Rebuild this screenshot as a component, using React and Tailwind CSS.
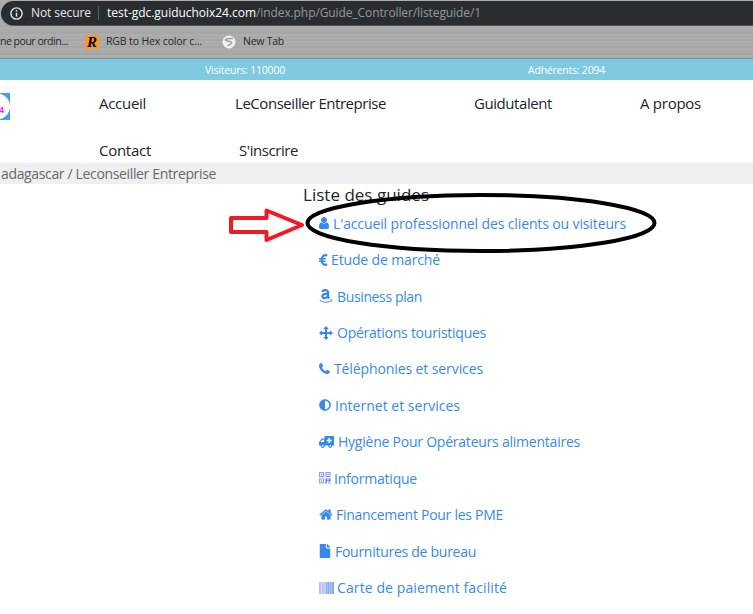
import React, { useLayoutEffect, useRef } from "react";
import { FaAdjust, FaFile } from "react-icons/fa";

// Text run whose tracking is adjusted so that it spans exactly `w` pixels.
function Fit({ w, children, className = "" }) {
  const ref = useRef(null);
  useLayoutEffect(() => {
    const el = ref.current;
    el.style.letterSpacing = "0px";
    const natural = el.getBoundingClientRect().width;
    el.style.letterSpacing = `${(w - natural) / el.textContent.length}px`;
  }, [w, children]);
  return <span ref={ref} className={`inline-block shrink-0 whitespace-nowrap ${className}`}>{children}</span>;
}

function UserIcon() {
  return (
    <svg viewBox="0 128 1280 1536" preserveAspectRatio="none" className="h-[12px] w-[10px]" fill="currentColor">
      <path d="M1280 1399q0 109-62.5 187t-150.5 78h-854q-88 0-150.5-78t-62.5-187q0-85 8.5-160.5t31.5-152 58.5-131 94-89 134.5-34.5q131 128 313 128t313-128q76 0 134.5 34.500t94 89 58.500 131 31.500 152 8.500 160.500zm-256-887q0 159-112.500 271.500t-271.500 112.500-271.500-112.500-112.500-271.500 112.500-271.500 271.500-112.500 271.500 112.500 112.500 271.500z" />
    </svg>
  );
}

function EuroIcon() {
  return (
    <svg viewBox="0 0 9 12" className="h-[12px] w-[9px]" fill="none" stroke="currentColor">
      <path d="M8.2 1.800C5.200.2 2.700 2 2.700 6s2.500 5.800 5.500 4.200" strokeWidth="2.200" />
      <path d="M0 4.700h7M0 7.300h6.400" strokeWidth="1.500" />
    </svg>
  );
}

function AmazonIcon() {
  return (
    <svg viewBox="0 0 14 14" className="h-[14px] w-[14px]" fill="none" stroke="currentColor">
      <path d="M3.400 3.200C3.700.6 9 .3 9 3.400v4.500l1.300 1.300M9 4.600c-3.600 0-5.600.5-5.600 2.600 0 2.600 4.100 2.700 5.600-.1" strokeWidth="2.200" />
      <path d="M.8 11.200c3.200 2.400 8 2.700 11 .8M11.500 11c1.500-.2 1.800 0 1 1.800" strokeWidth="1" />
    </svg>
  );
}

function MoveIcon() {
  return (
    <svg viewBox="0 0 14 14" className="size-[14px]" fill="currentColor">
      <path d="M7 0l2.800 3H8v3h3V4.200L14 7l-3 2.800V8H8v3h1.800L7 14l-2.800-3H6V8H3v1.800L0 7l3-2.800V6h3V3H4.200z" />
    </svg>
  );
}

function PhoneIcon() {
  return (
    <svg viewBox="0 0 11 11" className="size-[11px]" fill="currentColor">
      <path d="M2.600 0C3 0 3.500 1.600 4 2.700c.4.900-1.100 1.300-1.100 1.900 0 .7 2.600 3.400 3.500 3.500.6.100 1.200-1.300 1.900-1 .9.300 2.700 1.200 2.700 1.500 0 1.500-1.300 2.400-2.800 2.400C4.300 11 0 6.400 0 2.800 0 1.300 1.200 0 2.600 0z" />
    </svg>
  );
}

function AmbulanceIcon() {
  return (
    <svg viewBox="0 0 15 12" className="h-[12px] w-[15px]">
      <path fill="currentColor" fillRule="evenodd" d="M6 0h8.500q.5 0 .5.500V9.500H0V6.200L2.500 2.500H5.500V.500Q5.500 0 6 0zM3 3.700L1.400 6H5V3.700zM9.400 2v1.800H7.700v1.400h1.700V7h1.600V5.200h1.700V3.800H11V2z" />
      <circle cx="3.800" cy="9.800" r="1.500" fill="#fff" stroke="currentColor" strokeWidth="1.300" />
      <circle cx="11.200" cy="9.800" r="1.500" fill="#fff" stroke="currentColor" strokeWidth="1.300" />
    </svg>
  );
}

function QrIcon() {
  return (
    <svg viewBox="0 0 12 12" className="size-[12px]">
      <path d="M.6.600h4v4h-4zM7 .600h4v4H7zM.6 7h4v4h-4z" fill="none" stroke="#8d9fee" strokeWidth="1.200" />
      <path d="M2 2h1.300v1.300H2zM8.400 2h1.300v1.300H8.400zM2 8.400h1.300v1.300H2zM6.400 6.400h2v1.300h1.200V6.400h2v3.400h-2V8.800H8v2.800H6.400zM9 10.500h1v1H9zM10.700 10.500h1v1h-1z" fill="#6484ec" />
    </svg>
  );
}

function HomeIcon() {
  return (
    <svg viewBox="0 0 1792 1792" className="h-[15px] w-[14px]" fill="currentColor" stroke="currentColor" strokeWidth="30">
      <path d="M1472 992v480q0 26-19 45t-45 19h-384v-384h-256v384h-384q-26 0-45-19t-19-45v-480q0-1 .5-3t.5-3l575-474 575 474q1 2 1 6zm223-69l-62 74q-8 9-21 11h-3q-13 0-21-7l-692-577-692 577q-12 8-24 7-13-2-21-11l-62-74q-8-10-7-23.500t11-21.500l719-599q32-26 76-26t76 26l244 204v-195q0-14 9-23t23-9h192q14 0 23 9t9 23v408l219 182q10 8 11 21.500t-7 23.500z" />
    </svg>
  );
}

function BarcodeIcon() {
  return (
    <svg viewBox="0 0 15 12" className="h-[12px] w-[15px]" shapeRendering="crispEdges">
      <path fill="#d0b4ef" d="M0 0h1v12H0z" />
      <path fill="#c6bcf2" d="M1 0h1v12H1zM3 0h1v12H3z" />
      <path fill="#e4d8f8" d="M2 0h1v12H2z" />
      <path fill="#b4d6f6" d="M4 0h3v12H4z" />
      <path fill="#86b0ef" d="M7 0h1v12H7zM9 0h1v12H9z" />
      <path fill="#c7b8f1" d="M8 0h1v12H8zM10 0h1v12h-1z" />
      <path fill="#93a6f0" d="M11 0h1v12h-1zM13 0h2v12h-2z" />
      <path fill="#a8cff5" d="M12 0h1v12h-1z" />
    </svg>
  );
}

const guides = [
  { icon: <UserIcon />, box: "w-[14px]", w: 293, text: "L'accueil professionnel des clients ou visiteurs" },
  { icon: <EuroIcon />, box: "w-[12px]", w: 109, text: "Etude de marché" },
  { icon: <AmazonIcon />, box: "w-[18px]", w: 85, text: "Business plan" },
  { icon: <MoveIcon />, box: "w-[18px]", w: 149, text: "Opérations touristiques" },
  { icon: <PhoneIcon />, box: "w-[15px]", w: 149, text: "Téléphonies et services" },
  { icon: <FaAdjust className="size-[12px]" />, box: "w-[16px]", w: 125, text: "Internet et services" },
  { icon: <AmbulanceIcon />, box: "w-[19px]", w: 242, text: "Hygiène Pour Opérateurs alimentaires" },
  { icon: <QrIcon />, box: "w-[15px]", w: 83, text: "Informatique" },
  { icon: <HomeIcon />, box: "w-[17px]", w: 167, text: "Financement Pour les PME" },
  { icon: <FaFile className="h-[14px] w-[12px]" />, box: "w-[16px]", w: 141, text: "Fournitures de bureau" },
  { icon: <BarcodeIcon />, box: "w-[18px]", w: 170, text: "Carte de paiement facilité" },
];

export default function App() {
  return (
    <div className="relative h-[614px] w-[753px] overflow-hidden bg-white font-['Open_Sans','Noto_Sans',sans-serif]">
      <div className="h-[59px] border-b border-[#7c9198] bg-[#acacac] bg-[repeating-linear-gradient(180deg,#b1b1b1_0px,#a7a7a7_2px,#aeaeae_3px,#a4a4a4_5px,#b0b0b0_7px)]">
        <div className="pt-px">
          <div className="ml-px flex h-[25px] items-center rounded-l-full border-b border-[#55595b] bg-[#292d30] pl-[9px] text-[12px] text-[#e6e7e8]">
            <svg viewBox="0 0 13 13" className="size-[13px]" fill="none" stroke="currentColor" strokeWidth="1.400">
              <circle cx="6.500" cy="6.500" r="5.600" />
              <path d="M6.500 5.700v4M6.500 3v1.500" />
            </svg>
            <Fit w={60} className="ml-[8px]">Not secure</Fit>
            <span className="ml-[7px] h-[14px] w-px bg-[#5d6163]" />
            <span className="ml-[8px] flex">
              <Fit w={149} className="text-white">test-gdc.guiduchoix24.com</Fit>
              <Fit w={225} className="text-[#93989b]">/index.php/Guide_Controller/listeguide/1</Fit>
            </span>
          </div>
        </div>
        <div className="flex h-[32px] items-center text-[10.500px] text-[#282828]">
          <Fit w={68}>ne pour ordin...</Fit>
          <span className="ml-[17px] flex h-[14px] w-[14px] items-center justify-center bg-[#ff962d] font-['Liberation_Serif',serif] text-[15px] leading-none font-bold text-black italic">R</span>
          <Fit w={96} className="ml-[7px]">RGB to Hex color c...</Fit>
          <svg viewBox="0 0 14 14" className="ml-[20px] size-[14px]">
            <circle cx="7" cy="7" r="6.500" fill="#f1f1f1" />
            <path d="M11 3.500C8 3.800 4 3 3.500 4.800c-.2 2 6 .9 6.200 3 .1 1.700-2.500 1.900-4.200 3.200" fill="none" stroke="#a0a0a0" strokeWidth="1.400" />
          </svg>
          <Fit w={41} className="ml-[7px]">New Tab</Fit>
        </div>
      </div>

      <div className="flex h-[21px] items-center bg-[#7fcae1] pt-[2px] text-[10.500px] text-white">
        <Fit w={80} className="ml-[205px]">Visiteurs: 110000</Fit>
        <Fit w={77} className="ml-[243px]">Adhérents: 2094</Fit>
      </div>

      <div className="flex h-[83px] text-[15px] text-[#212529]">
        <svg viewBox="0 0 10 27" className="mt-[13px] h-[27px] w-[10px]">
          <path d="M0 0h10v27H0z" fill="#479bf8" />
          <circle cx="-3" cy="13.500" r="13" fill="#fff" />
          <text x="-1" y="20" fontSize="9" fontWeight="700" fill="#fb1be0" fontFamily="Liberation Sans, sans-serif">4</text>
        </svg>
        <nav className="ml-[89px]">
          <div className="flex h-[47px] items-center">
            <Fit w={47}>Accueil</Fit>
            <Fit w={151} className="ml-[89px]">LeConseiller Entreprise</Fit>
            <Fit w={78} className="ml-[88px]">Guidutalent</Fit>
            <Fit w={61} className="ml-[88px]">A propos</Fit>
          </div>
          <div className="flex h-[47px] items-center">
            <Fit w={52}>Contact</Fit>
            <Fit w={59} className="ml-[88px]">S'inscrire</Fit>
          </div>
        </nav>
      </div>

      <div className="flex h-[21px] items-center bg-[#efefef] pl-px text-[14px] text-[#68696a]">
        <Fit w={215}>adagascar / Leconseiller Entreprise</Fit>
      </div>

      <main className="pl-[303px]">
        <h1 className="flex h-[21px] items-center text-[17px] font-medium text-[#212529]">
          <Fit w={126}>Liste des guides</Fit>
        </h1>
        <ul className="pl-[16px] text-[14px] text-[#3789ee]">
          {guides.map((g) => (
            <li key={g.text} className="flex h-[36.450px] items-center">
              <span className={`flex shrink-0 ${g.box}`}>{g.icon}</span>
              <Fit w={g.w}>{g.text}</Fit>
            </li>
          ))}
        </ul>
      </main>

      {/* Hand-drawn annotations over the page */}
      <svg viewBox="0 0 435 70" className="absolute top-[188px] left-[227px] h-[70px] w-[435px]" fill="none">
        <ellipse cx="254" cy="35" rx="173.500" ry="28" stroke="#000" strokeWidth="4" />
        <path d="M4 30h35.500v-7.500L75 37 39.500 52v-8H4z" stroke="#ed1c24" strokeWidth="4" strokeLinejoin="round" />
      </svg>
    </div>
  );
}
